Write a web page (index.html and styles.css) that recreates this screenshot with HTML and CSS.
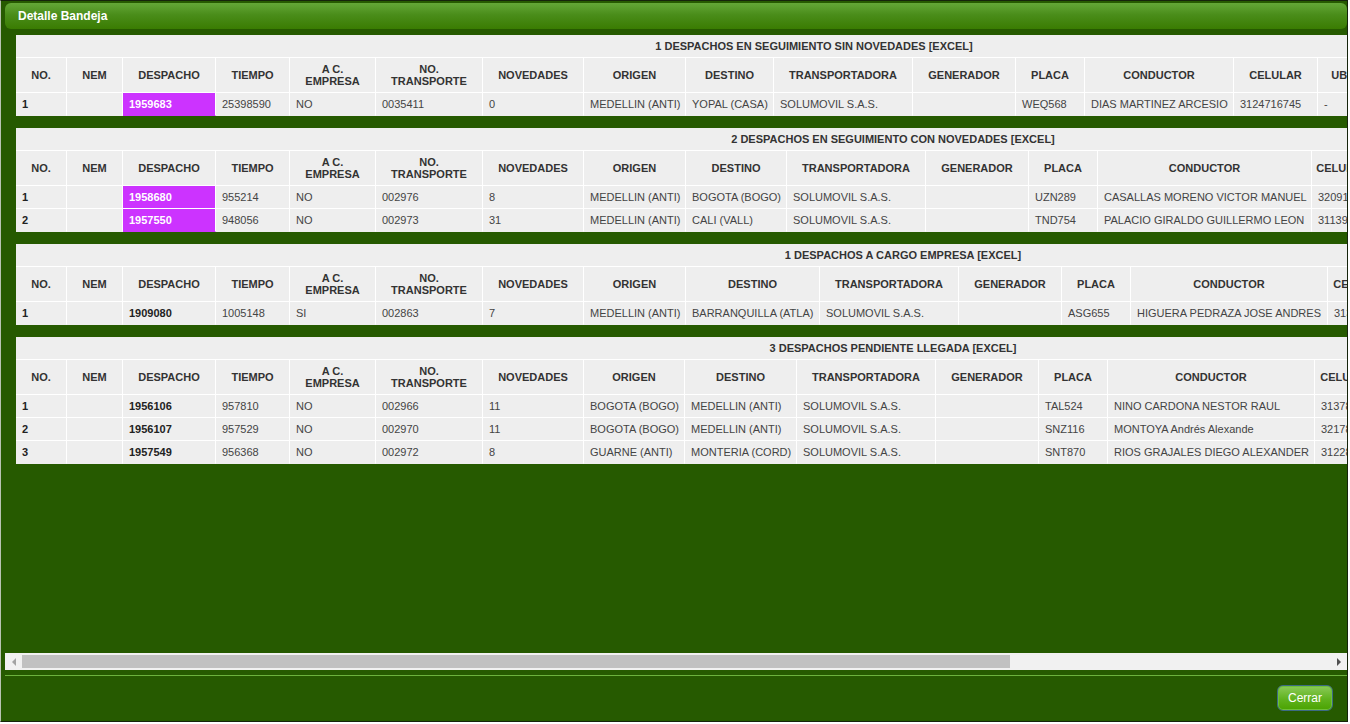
FILE: index.html
```html
<!DOCTYPE html>
<html lang="es">
<head>
<meta charset="utf-8">
<title>Detalle Bandeja</title>
<link rel="stylesheet" href="styles.css">
</head>
<body>
<div class="dialog">
  <div class="titlebar">Detalle Bandeja</div>
  <div class="content">

    <table class="grid t1">
      <colgroup>
        <col class="c-no"><col class="c-nem"><col class="c-desp"><col class="c-tiem"><col class="c-ac"><col class="c-ntr"><col class="c-nov"><col class="c-ori"><col class="c-des"><col class="c-tra"><col class="c-gen"><col class="c-pla"><col class="c-con"><col class="c-cel"><col class="c-ubi"><col>
      </colgroup>
      <tr class="cap"><th colspan="16">1 DESPACHOS EN SEGUIMIENTO SIN NOVEDADES [EXCEL]</th></tr>
      <tr class="hdr"><th>NO.</th><th>NEM</th><th>DESPACHO</th><th>TIEMPO</th><th>A C.<br>EMPRESA</th><th>NO.<br>TRANSPORTE</th><th>NOVEDADES</th><th>ORIGEN</th><th>DESTINO</th><th>TRANSPORTADORA</th><th>GENERADOR</th><th>PLACA</th><th>CONDUCTOR</th><th>CELULAR</th><th>UBICACION</th><th>FECHA REPORTE</th></tr>
      <tr><td class="b">1</td><td></td><td class="hl">1959683</td><td>25398590</td><td>NO</td><td>0035411</td><td>0</td><td>MEDELLIN (ANTI)</td><td>YOPAL (CASA)</td><td>SOLUMOVIL S.A.S.</td><td></td><td>WEQ568</td><td>DIAS MARTINEZ ARCESIO</td><td>3124716745</td><td>-</td><td>-</td></tr>
    </table>

    <table class="grid t2">
      <colgroup>
        <col class="c-no"><col class="c-nem"><col class="c-desp"><col class="c-tiem"><col class="c-ac"><col class="c-ntr"><col class="c-nov"><col class="c-ori"><col class="c-des"><col class="c-tra"><col class="c-gen"><col class="c-pla"><col class="c-con"><col class="c-cel"><col class="c-ubi"><col>
      </colgroup>
      <tr class="cap"><th colspan="16">2 DESPACHOS EN SEGUIMIENTO CON NOVEDADES [EXCEL]</th></tr>
      <tr class="hdr"><th>NO.</th><th>NEM</th><th>DESPACHO</th><th>TIEMPO</th><th>A C.<br>EMPRESA</th><th>NO.<br>TRANSPORTE</th><th>NOVEDADES</th><th>ORIGEN</th><th>DESTINO</th><th>TRANSPORTADORA</th><th>GENERADOR</th><th>PLACA</th><th>CONDUCTOR</th><th>CELULAR</th><th>UBICACION</th><th>FECHA REPORTE</th></tr>
      <tr><td class="b">1</td><td></td><td class="hl">1958680</td><td>955214</td><td>NO</td><td>002976</td><td>8</td><td>MEDELLIN (ANTI)</td><td>BOGOTA (BOGO)</td><td>SOLUMOVIL S.A.S.</td><td></td><td>UZN289</td><td>CASALLAS MORENO VICTOR MANUEL</td><td>3209145872</td><td>-</td><td>-</td></tr>
      <tr><td class="b">2</td><td></td><td class="hl">1957550</td><td>948056</td><td>NO</td><td>002973</td><td>31</td><td>MEDELLIN (ANTI)</td><td>CALI (VALL)</td><td>SOLUMOVIL S.A.S.</td><td></td><td>TND754</td><td>PALACIO GIRALDO GUILLERMO LEON</td><td>3113926410</td><td>-</td><td>-</td></tr>
    </table>

    <table class="grid t3">
      <colgroup>
        <col class="c-no"><col class="c-nem"><col class="c-desp"><col class="c-tiem"><col class="c-ac"><col class="c-ntr"><col class="c-nov"><col class="c-ori"><col class="c-des"><col class="c-tra"><col class="c-gen"><col class="c-pla"><col class="c-con"><col class="c-cel"><col class="c-ubi"><col>
      </colgroup>
      <tr class="cap"><th colspan="16">1 DESPACHOS A CARGO EMPRESA [EXCEL]</th></tr>
      <tr class="hdr"><th>NO.</th><th>NEM</th><th>DESPACHO</th><th>TIEMPO</th><th>A C.<br>EMPRESA</th><th>NO.<br>TRANSPORTE</th><th>NOVEDADES</th><th>ORIGEN</th><th>DESTINO</th><th>TRANSPORTADORA</th><th>GENERADOR</th><th>PLACA</th><th>CONDUCTOR</th><th>CELULAR</th><th>UBICACION</th><th>FECHA REPORTE</th></tr>
      <tr><td class="b">1</td><td></td><td class="b">1909080</td><td>1005148</td><td>SI</td><td>002863</td><td>7</td><td>MEDELLIN (ANTI)</td><td>BARRANQUILLA (ATLA)</td><td>SOLUMOVIL S.A.S.</td><td></td><td>ASG655</td><td>HIGUERA PEDRAZA JOSE ANDRES</td><td>3134570981</td><td>-</td><td>-</td></tr>
    </table>

    <table class="grid t4">
      <colgroup>
        <col class="c-no"><col class="c-nem"><col class="c-desp"><col class="c-tiem"><col class="c-ac"><col class="c-ntr"><col class="c-nov"><col class="c-ori"><col class="c-des"><col class="c-tra"><col class="c-gen"><col class="c-pla"><col class="c-con"><col class="c-cel"><col class="c-ubi"><col>
      </colgroup>
      <tr class="cap"><th colspan="16">3 DESPACHOS PENDIENTE LLEGADA [EXCEL]</th></tr>
      <tr class="hdr"><th>NO.</th><th>NEM</th><th>DESPACHO</th><th>TIEMPO</th><th>A C.<br>EMPRESA</th><th>NO.<br>TRANSPORTE</th><th>NOVEDADES</th><th>ORIGEN</th><th>DESTINO</th><th>TRANSPORTADORA</th><th>GENERADOR</th><th>PLACA</th><th>CONDUCTOR</th><th>CELULAR</th><th>UBICACION</th><th>FECHA REPORTE</th></tr>
      <tr><td class="b">1</td><td></td><td class="b">1956106</td><td>957810</td><td>NO</td><td>002966</td><td>11</td><td>BOGOTA (BOGO)</td><td>MEDELLIN (ANTI)</td><td>SOLUMOVIL S.A.S.</td><td></td><td>TAL524</td><td>NINO CARDONA NESTOR RAUL</td><td>3137842216</td><td>-</td><td>-</td></tr>
      <tr><td class="b">2</td><td></td><td class="b">1956107</td><td>957529</td><td>NO</td><td>002970</td><td>11</td><td>BOGOTA (BOGO)</td><td>MEDELLIN (ANTI)</td><td>SOLUMOVIL S.A.S.</td><td></td><td>SNZ116</td><td>MONTOYA Andrés Alexande</td><td>3217850134</td><td>-</td><td>-</td></tr>
      <tr><td class="b">3</td><td></td><td class="b">1957549</td><td>956368</td><td>NO</td><td>002972</td><td>8</td><td>GUARNE (ANTI)</td><td>MONTERIA (CORD)</td><td>SOLUMOVIL S.A.S.</td><td></td><td>SNT870</td><td>RIOS GRAJALES DIEGO ALEXANDER</td><td>3122865077</td><td>-</td><td>-</td></tr>
    </table>

  </div>
  <div class="hscroll">
    <span class="sb-btn"><span class="tri-left"></span></span>
    <span class="sb-track"><span class="sb-thumb"></span></span>
    <span class="sb-btn"><span class="tri-right"></span></span>
  </div>
  <div class="footer">
    <button class="btn" type="button">Cerrar</button>
  </div>
</div>
</body>
</html>
```

FILE: styles.css
```css
* { box-sizing: border-box; }
html, body { margin: 0; padding: 0; }
body {
  background: #fff;
  font-family: "Liberation Sans", Arial, sans-serif;
}

.dialog {
  width: 1348px;
  height: 722px;
  background: #265a00;
  border: 1px solid #16240c;
  border-left-color: #b9c3b2;
  padding: 2px 0 0 4px;
  display: flex;
  flex-direction: column;
}

.titlebar {
  flex: none;
  height: 26px;
  border-radius: 6px;
  background: linear-gradient(#64a737, #4a8d1a 45%, #3a7c02);
  color: #fff;
  font-weight: bold;
  font-size: 12px;
  line-height: 26px;
  padding-left: 13px;
}

.content {
  flex: none;
  height: 624px;
  overflow: hidden;
  padding: 6px 0 0 11px;
}

/* horizontal scrollbar */
.hscroll {
  flex: none;
  height: 17px;
  display: flex;
  background: #f1f1f1;
}
.sb-btn {
  flex: none;
  width: 17px;
  display: flex;
  align-items: center;
  justify-content: center;
}
.tri-left {
  width: 0; height: 0;
  border-top: 4px solid transparent;
  border-bottom: 4px solid transparent;
  border-right: 4px solid #a3a3a3;
}
.tri-right {
  width: 0; height: 0;
  border-top: 4px solid transparent;
  border-bottom: 4px solid transparent;
  border-left: 4px solid #505050;
}
.sb-track {
  flex: 1;
  display: flex;
  align-items: center;
}
.sb-thumb {
  width: 988px;
  height: 13px;
  background: #c1c1c1;
}

.grid {
  border-collapse: separate;
  border-spacing: 0;
  table-layout: fixed;
  background: #eee;
  margin-bottom: 12px;
  font-size: 11px;
  color: #444;
}
.grid th, .grid td {
  border-right: 1px solid #fff;
  border-bottom: 1px solid #fff;
  overflow: hidden;
  white-space: nowrap;
}
.grid tr:last-child td { border-bottom-color: transparent; }

.grid .cap { height: 23px; }
.grid .cap th {
  padding: 0;
  text-align: center;
  font-weight: bold;
  color: #333;
}
.grid .hdr { height: 35px; }
.grid .hdr th {
  padding: 0 4px;
  line-height: 12px;
  text-align: center;
  font-weight: bold;
  color: #333;
}
.grid tr { height: 23px; }
.grid td { padding: 0 6px; }
.grid td.b { font-weight: bold; color: #222; }
.grid td.hl { background: #cc33ff; color: #fff; font-weight: bold; }

.t1 { width: 1597px; }
.t2 { width: 1755px; }
.t3 { width: 1775px; }
.t4 { width: 1755px; }

.c-no { width: 51px; }
.c-nem { width: 56px; }
.c-desp { width: 93px; }
.c-tiem { width: 74px; }
.c-ac { width: 86px; }
.c-ntr { width: 107px; }
.c-nov { width: 101px; }
.c-ori { width: 102px; }
.c-des { width: 88px; }
.c-tra { width: 139px; }
.c-gen { width: 103px; }
.c-pla { width: 69px; }
.c-con { width: 149px; }
.c-cel { width: 84px; }
.c-ubi { width: 90px; }

.t2 .c-des { width: 101px; }
.t2 .c-con { width: 214px; }
.t2 .c-cel { width: 62px; }

.t3 .c-des { width: 134px; }
.t3 .c-con { width: 197px; }
.t3 .c-cel { width: 64px; }

.t4 .c-ori { width: 101px; }
.t4 .c-des { width: 112px; }
.t4 .c-con { width: 207px; }
.t4 .c-cel { width: 64px; }

.footer {
  flex: 1;
  margin-top: 5px;
  border-top: 1px solid #6cb23e;
  display: flex;
  justify-content: flex-end;
  align-items: flex-start;
  padding: 9px 14px 0 0;
}

.btn {
  width: 56px;
  height: 26px;
  border: 1px solid #3c6a84;
  border-radius: 6px;
  background: linear-gradient(#8bcb58, #5fb21e 55%, #4aa300);
  box-shadow: inset 0 0 0 1px #6fbf3a;
  color: #fff;
  font-family: "Liberation Sans", Arial, sans-serif;
  font-size: 12px;
  padding: 0;
}
```
